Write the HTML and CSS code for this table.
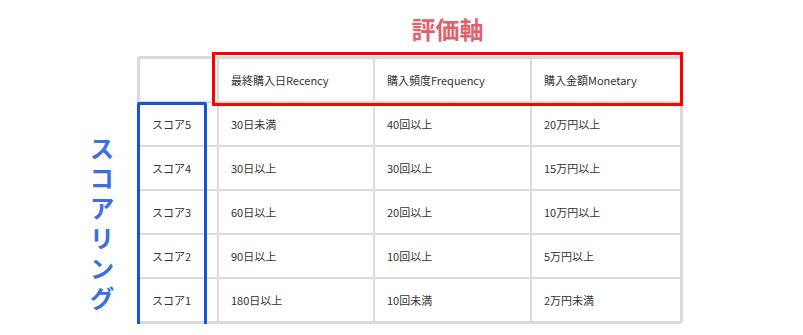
FILE: index.html
```html
<!DOCTYPE html>
<html lang="ja">
<head>
<meta charset="utf-8">
<title>RFM スコアリング</title>
<link rel="stylesheet" href="styles.css">
</head>
<body>
<div class="board">
  <div class="axis-title">評価軸</div>
  <div class="score-label">スコアリング</div>
  <div class="table-wrap">
    <div class="grid">
      <div class="cell"></div>
      <div class="cell">最終購入日Recency</div>
      <div class="cell">購入頻度Frequency</div>
      <div class="cell">購入金額Monetary</div>

      <div class="cell">スコア5</div>
      <div class="cell">30日未満</div>
      <div class="cell">40回以上</div>
      <div class="cell">20万円以上</div>

      <div class="cell">スコア4</div>
      <div class="cell">30日以上</div>
      <div class="cell">30回以上</div>
      <div class="cell">15万円以上</div>

      <div class="cell">スコア3</div>
      <div class="cell">60日以上</div>
      <div class="cell">20回以上</div>
      <div class="cell">10万円以上</div>

      <div class="cell">スコア2</div>
      <div class="cell">90日以上</div>
      <div class="cell">10回以上</div>
      <div class="cell">5万円以上</div>

      <div class="cell">スコア1</div>
      <div class="cell">180日以上</div>
      <div class="cell">10回未満</div>
      <div class="cell">2万円未満</div>
    </div>
    <div class="hl-axis"></div>
    <div class="hl-score"></div>
  </div>
</div>
</body>
</html>
```

FILE: styles.css
```css
html, body {
  margin: 0;
  padding: 0;
  background: #ffffff;
}

body {
  font-family: "Noto Sans CJK JP", "Noto Sans", sans-serif;
  color: #333333;
}

.board {
  display: grid;
  grid-template-columns: 48px 546px;
  margin-left: 89px;
  padding-top: 17px;
}

.axis-title {
  grid-column: 2;
  grid-row: 1;
  margin-left: 75px;
  width: 471px;
  text-align: center;
  font-size: 24px;
  line-height: 24px;
  font-weight: 700;
  color: #e0626b;
  margin-bottom: 15px;
}

.score-label {
  grid-column: 1;
  grid-row: 2;
  align-self: start;
  justify-self: start;
  writing-mode: vertical-rl;
  text-orientation: upright;
  font-size: 25px;
  line-height: 25px;
  letter-spacing: 5px;
  font-weight: 700;
  color: #3b70df;
  margin-top: 80px;
}

.table-wrap {
  grid-column: 2;
  grid-row: 2;
  position: relative;
}

.grid {
  display: grid;
  grid-template-columns: 77px 154px 155px 148px;
  grid-auto-rows: 42px;
  gap: 2px;
  background: #dcdcdc;
  border: 3px solid #d9d9d9;
  border-radius: 4px;
  overflow: hidden;
}

.cell {
  background: #ffffff;
  display: flex;
  align-items: center;
  padding-left: 12px;
  font-size: 11px;
  color: #333333;
  white-space: nowrap;
}

.hl-axis {
  position: absolute;
  left: 75px;
  top: -4px;
  width: 471px;
  height: 54px;
  box-sizing: border-box;
  border: 3px solid #ff0000;
}

.hl-score {
  position: absolute;
  left: 0;
  top: 46px;
  width: 70px;
  height: 229px;
  box-sizing: border-box;
  border: 3px solid #1556d6;
  border-radius: 2px;
}
```
